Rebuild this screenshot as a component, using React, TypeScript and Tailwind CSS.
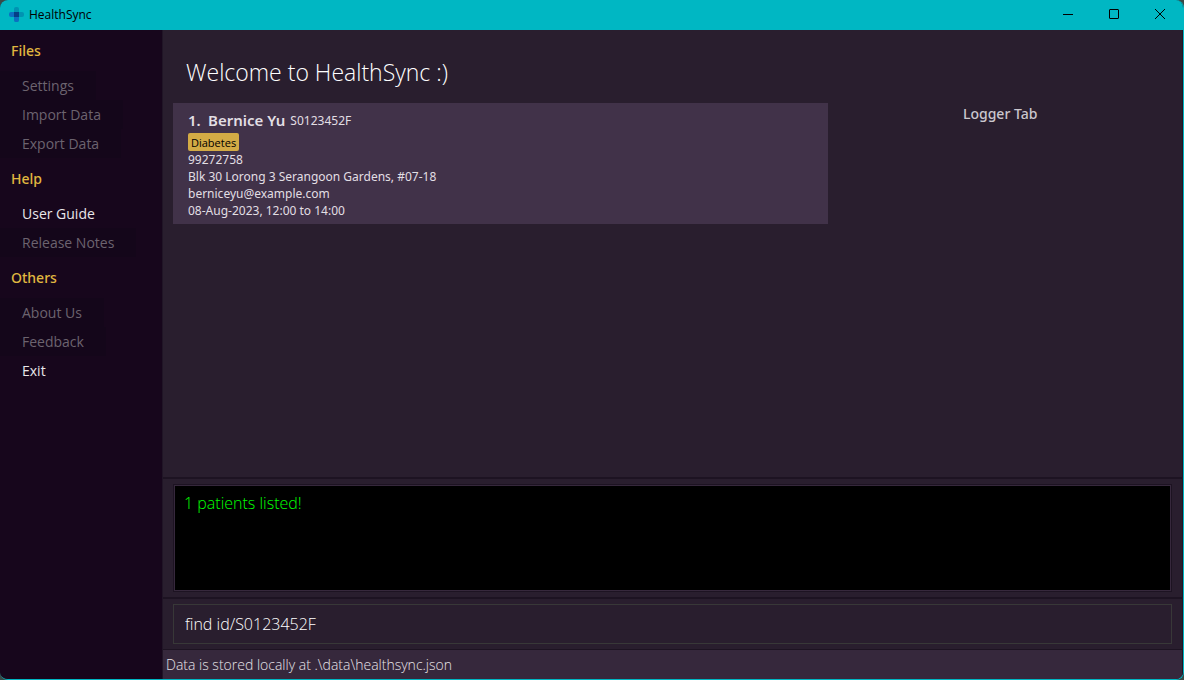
const menu = [
  {
    title: "Files",
    items: [
      { label: "Settings", enabled: false },
      { label: "Import Data", enabled: false },
      { label: "Export Data", enabled: false },
    ],
  },
  {
    title: "Help",
    items: [
      { label: "User Guide", enabled: true },
      { label: "Release Notes", enabled: false },
    ],
  },
  {
    title: "Others",
    items: [
      { label: "About Us", enabled: false },
      { label: "Feedback", enabled: false },
      { label: "Exit", enabled: true },
    ],
  },
];

const details = [
  "99272758",
  "Blk 30 Lorong 3 Serangoon Gardens, #07-18",
  "berniceyu@example.com",
  "08-Aug-2023, 12:00 to 14:00",
];

function Logo() {
  return (
    <svg width="16" height="16" viewBox="0 0 16 16" aria-hidden="true">
      <rect x="5" y="0" width="5" height="15" rx="2" fill="#0093b2" />
      <rect x="5" y="5" width="10" height="5" rx="2" fill="#0093b2" />
      <path d="M2 5H10V13A2 2 0 0 1 8 15H7A2 2 0 0 1 5 13V10H2A2 2 0 0 1 0 8V7A2 2 0 0 1 2 5Z" fill="#0b6fc2" />
      <rect x="5" y="5" width="5" height="5" fill="#063f86" />
    </svg>
  );
}

function TitleBar() {
  return (
    <header className="flex h-[30px] shrink-0 items-center justify-between bg-[#00b7c3] text-black">
      <div className="flex items-center gap-1 pl-[9px]">
        <Logo />
        <h1 className="text-[12px] leading-4">HealthSync</h1>
      </div>
      <div className="flex pb-[2px]">
        <button aria-label="Minimize" className="flex h-7 w-[46px] items-center justify-center">
          <svg width="10" height="10" viewBox="0 0 10 10" stroke="currentColor" fill="none">
            <path d="M0 5.5H10" />
          </svg>
        </button>
        <button aria-label="Maximize" className="flex h-7 w-[46px] items-center justify-center">
          <svg width="10" height="10" viewBox="0 0 10 10" stroke="currentColor" fill="none">
            <rect x="0.5" y="0.5" width="9" height="9" rx="0.5" />
          </svg>
        </button>
        <button aria-label="Close" className="flex h-7 w-[46px] items-center justify-center">
          <svg width="10" height="10" viewBox="0 0 10 10" stroke="currentColor" fill="none">
            <path d="M0 0L10 10M10 0L0 10" />
          </svg>
        </button>
      </div>
    </header>
  );
}

function Sidebar() {
  return (
    <nav className="w-[162px] shrink-0 bg-[#17061c]">
      {menu.map((section) => (
        <section key={section.title}>
          <h2 className="flex h-[41px] items-center pl-[11px] font-['Noto_Sans','Open_Sans',sans-serif] text-[14px] font-medium text-[#e0b840]">
            {section.title}
          </h2>
          <ul>
            {section.items.map((item) => (
              <li key={item.label}>
                <button
                  disabled={!item.enabled}
                  className="flex h-[29px] items-center bg-[#17061c] px-[22px] text-[14px] text-[#e9e6ea] disabled:bg-[#14061a] disabled:text-[#6c636f]"
                >
                  {item.label}
                </button>
              </li>
            ))}
          </ul>
        </section>
      ))}
    </nav>
  );
}

export default function App() {
  return (
    <div className="flex min-h-screen flex-col bg-[#3b4a47] font-['Open_Sans','Noto_Sans',sans-serif]">
      <div className="flex flex-1 flex-col overflow-hidden rounded-lg border-r border-b border-[#00b7c3] bg-[#291e2e]">
        <TitleBar />
        <div className="flex flex-1">
          <Sidebar />
          <main className="flex min-w-0 flex-1 flex-col border-x border-[#201526]">
            <div className="flex-1 px-[10px]">
              <h2 className="flex h-[73px] items-center px-[13px] pt-3 text-[23px] font-light text-white">
                Welcome to HealthSync :)
              </h2>
              <div className="grid grid-cols-[65.6%_1fr] font-['Noto_Sans','Open_Sans',sans-serif]">
                <article className="bg-[#413249] px-[15px] pt-2 pb-[5px] text-[12px] leading-[17px] text-[#e2dfe4]">
                  <h3 className="flex h-[18px] items-center">
                    <span className="w-5 text-[15px] font-semibold">1.</span>
                    <span className="text-[15px] font-semibold">Bernice Yu</span>
                    <span className="pl-[5px]">S0123452F</span>
                  </h3>
                  <span className="mt-1 flex h-[18px] w-fit items-center rounded-xs bg-[#d3ab45] px-[3px] font-['Open_Sans','Noto_Sans',sans-serif] text-[11px] text-black">
                    Diabetes
                  </span>
                  {details.map((line) => (
                    <p key={line}>{line}</p>
                  ))}
                </article>
                <h3 className="text-center text-[14px] leading-[22px] font-medium text-[#cbc7cd]">Logger Tab</h3>
              </div>
            </div>
            <section className="border-t-2 border-[#1d1322] px-[10px] py-[5px]">
              <div className="border border-[#1d1322]">
                <output className="block h-[106px] border border-[#36283c] bg-black px-[9px] pt-[5px] text-[16px] leading-6 font-light text-[#00ff00]">
                  1 patients listed!
                </output>
              </div>
            </section>
            <section className="border-t-2 border-b border-[#1d1322] px-[10px] py-[5px]">
              <input
                aria-label="Command"
                defaultValue="find id/S0123452F"
                className="block h-10 w-full border border-[#383838] bg-transparent px-[11px] text-[16px] font-light text-white outline-none"
              />
            </section>
            <footer className="h-[29px] bg-[#36283c] pl-[3px] text-[14px] leading-[29px] font-light text-[#e6e3e8]">
              Data is stored locally at .\data\healthsync.json
            </footer>
          </main>
        </div>
      </div>
    </div>
  );
}
